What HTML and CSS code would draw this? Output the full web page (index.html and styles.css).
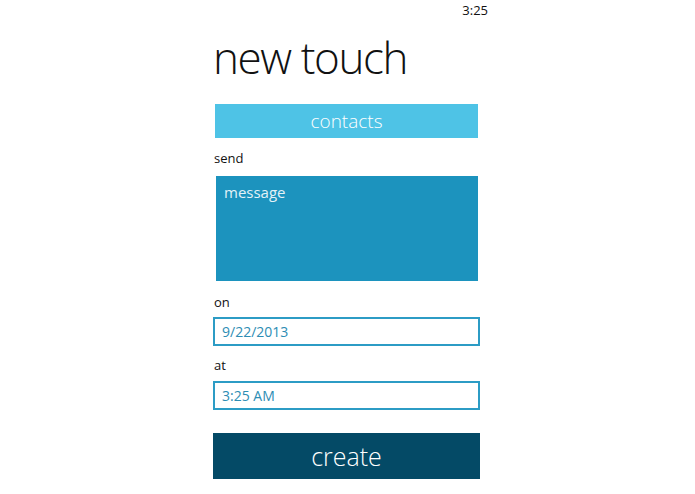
FILE: index.html
```html
<!DOCTYPE html>
<html>
<head>
    <meta charset="UTF-8">
    <meta name="viewport" content="width=device-width, initial-scale=1.0">
    <title>new touch</title>
    <link rel="stylesheet" href="styles.css">
</head>
<body>
    <div class="status">3:25</div>
    <div class="page">
        <h1 class="title">new touch</h1>
        <button class="contacts">contacts</button>
        <div class="label send">send</div>
        <div class="message">message</div>
        <div class="label on">on</div>
        <div class="field">9/22/2013</div>
        <div class="label at">at</div>
        <div class="field">3:25 AM</div>
        <button class="create">create</button>
    </div>
</body>
</html>
```

FILE: styles.css
```css
body {
    margin: 0;
    background: #fff;
    font-family: "Open Sans", "Noto Sans", sans-serif;
    color: #1a1a1a;
}
.status {
    height: 20px;
    line-height: 20px;
    font-size: 13px;
    text-align: right;
    padding-right: 207px;
    color: #111;
}
.page {
    width: 267px;
    padding-left: 213px;
}
.title {
    margin: 9px 0 0;
    height: 56px;
    font-size: 44px;
    line-height: 56px;
    font-weight: 300;
    letter-spacing: -1.4px;
    color: #111;
}
.contacts, .create {
    display: block;
    border: 0;
    padding: 0;
    font-family: inherit;
    color: #fff;
    font-weight: 300;
}
.contacts {
    margin: 19px 2px 0;
    width: 263px;
    height: 34px;
    background: #4ec3e6;
    font-size: 19px;
}
.label {
    height: 20px;
    line-height: 20px;
    font-size: 13px;
    padding-left: 1px;
    color: #111;
}
.send { margin: 10px 0 8px; }
.on { margin: 11px 0 5px; }
.at { margin: 9px 0 6px; }
.message {
    margin: 0 2px 0 3px;
    height: 105px;
    box-sizing: border-box;
    background: #1c93be;
    color: #e3f2f8;
    font-size: 15px;
    padding: 6px 8px;
}
.field {
    height: 29px;
    box-sizing: border-box;
    border: 2px solid #2c9cc5;
    line-height: 25px;
    padding-left: 7px;
    font-size: 14px;
    color: #2d8db4;
}
.create {
    margin-top: 23px;
    width: 267px;
    height: 46px;
    background: #044a66;
    font-size: 25px;
}
```
